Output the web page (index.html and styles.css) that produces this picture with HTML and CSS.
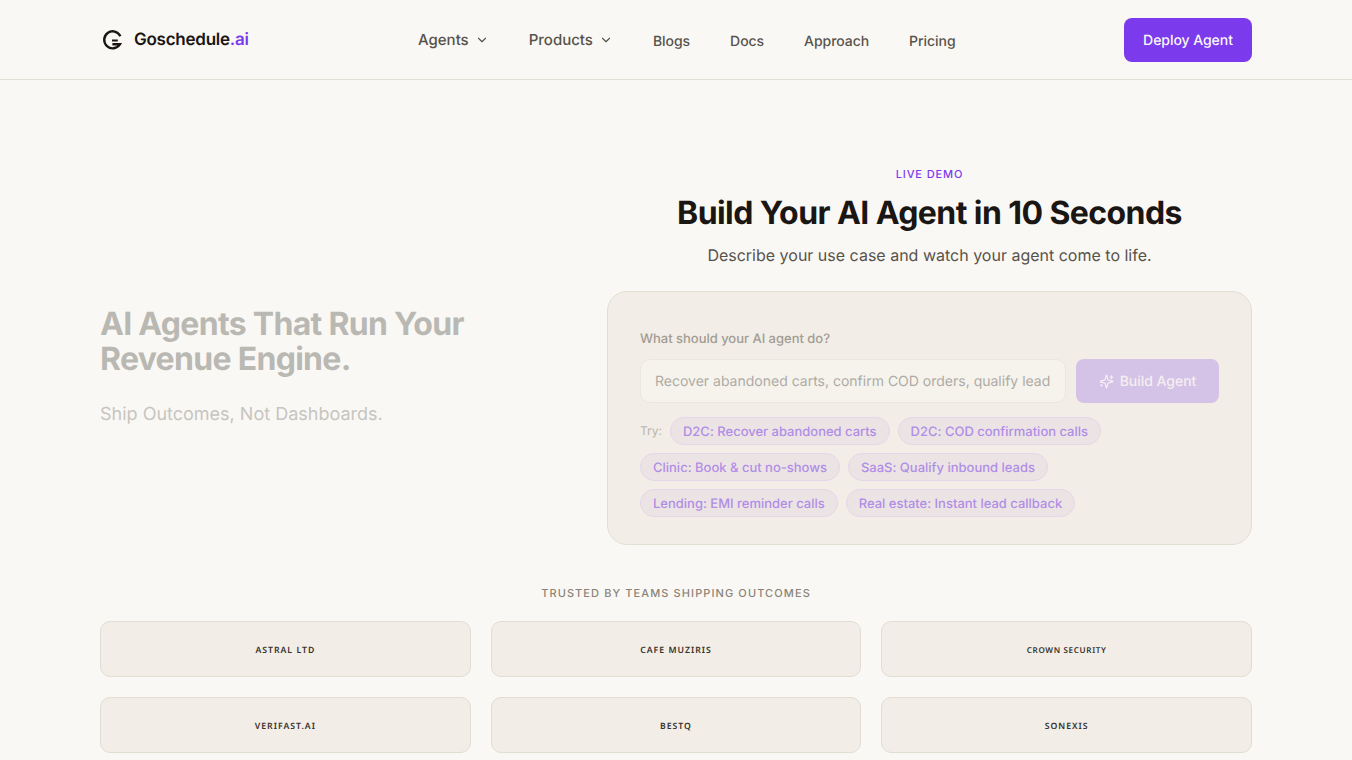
FILE: index.html
```html
<!DOCTYPE html>
<html lang="en">
<head>
<meta charset="utf-8">
<title>Goschedule.ai</title>
<link rel="stylesheet" href="styles.css">
</head>
<body>
<header class="site-header">
  <div class="container header-row">
    <a class="brand">
      <svg class="brand-mark" viewBox="0 0 24 24" width="24" height="24" fill="none" stroke="#1a1613" stroke-width="2.4">
        <path d="M20.4 8.2A8.5 8.5 0 1 0 20 16.2H12.4"/>
        <path d="M12 12.5h5.8" stroke-width="2"/>
      </svg>
      <span class="brand-name">Goschedule<span class="accent">.ai</span></span>
    </a>
    <nav class="nav">
      <a class="nav-menu">Agents <svg class="chevron" viewBox="0 0 24 24"><path d="m6 9 6 6 6-6"/></svg></a>
      <a class="nav-menu">Products <svg class="chevron" viewBox="0 0 24 24"><path d="m6 9 6 6 6-6"/></svg></a>
      <a class="nav-link">Blogs</a>
      <a class="nav-link">Docs</a>
      <a class="nav-link">Approach</a>
      <a class="nav-link">Pricing</a>
    </nav>
    <a class="deploy">Deploy Agent</a>
  </div>
</header>
<main class="container">
  <section class="hero">
    <div class="pitch">
      <h1 class="pitch-title">AI Agents That Run Your Revenue Engine.</h1>
      <p class="pitch-sub">Ship Outcomes, Not Dashboards.</p>
    </div>
    <div class="demo">
      <p class="eyebrow">LIVE DEMO</p>
      <h2 class="demo-title">Build Your AI Agent in 10 Seconds</h2>
      <p class="demo-sub">Describe your use case and watch your agent come to life.</p>
      <div class="card">
        <div class="card-body">
          <label class="prompt-label">What should your AI agent do?</label>
          <div class="prompt-row">
            <div class="prompt-input"><span class="prompt-text">Recover abandoned carts, confirm COD orders, qualify lead</span></div>
            <div class="build">
              <svg class="sparkles" viewBox="0 0 24 24"><path d="M9.937 15.5A2 2 0 0 0 8.5 14.063l-6.135-1.582a.5.5 0 0 1 0-.962L8.5 9.936A2 2 0 0 0 9.937 8.5l1.582-6.135a.5.5 0 0 1 .963 0L14.063 8.5A2 2 0 0 0 15.5 9.937l6.135 1.581a.5.5 0 0 1 0 .964L15.5 14.063a2 2 0 0 0-1.437 1.437l-1.582 6.135a.5.5 0 0 1-.963 0z"/><path d="M20 3v4M22 5h-4M4 17v2M5 18H3"/></svg>
              <span>Build Agent</span>
            </div>
          </div>
          <div class="chips">
            <span class="try">Try:</span>
            <span class="chip">D2C: Recover abandoned carts</span>
            <span class="chip">D2C: COD confirmation calls</span>
            <span class="chip">Clinic: Book &amp; cut no-shows</span>
            <span class="chip">SaaS: Qualify inbound leads</span>
            <span class="chip">Lending: EMI reminder calls</span>
            <span class="chip">Real estate: Instant lead callback</span>
          </div>
        </div>
      </div>
    </div>
  </section>
  <section class="trusted">
    <p class="trusted-title">TRUSTED BY TEAMS SHIPPING OUTCOMES</p>
    <div class="logos">
      <div class="logo">ASTRAL LTD</div>
      <div class="logo">CAFE MUZIRIS</div>
      <div class="logo logo-small">CROWN SECURITY</div>
      <div class="logo">VERIFAST.AI</div>
      <div class="logo">BESTQ</div>
      <div class="logo">SONEXIS</div>
    </div>
  </section>
</main>
</body>
</html>
```
FILE: styles.css
```css
* { box-sizing: border-box; }
body { margin: 0; height: 760px; overflow: hidden; background: #faf8f5; color: #1a1613; font-family: Inter, sans-serif; text-rendering: geometricPrecision; }
h1, h2, p { margin: 0; }
.container { width: 1152px; margin: 0 auto; }
.site-header { height: 80px; border-bottom: 1px solid #e2ded5; }
.header-row { height: 79px; display: flex; align-items: center; justify-content: space-between; }
.brand { display: flex; align-items: center; gap: 10px; width: 318px; }
.brand-name { font-size: 17px; font-weight: 600; line-height: 24px; letter-spacing: -0.25px; }
.accent { color: #7c3aed; }
.nav { display: flex; gap: 40px; align-items: center; margin-right: auto; color: #57534b; font-weight: 500; }
.nav-menu { display: flex; align-items: center; gap: 6px; font-size: 15px; line-height: 24px; }
.nav-link { font-size: 14px; line-height: 20px; padding-top: 4px; letter-spacing: -0.05px; }
.chevron { width: 14px; height: 14px; fill: none; stroke: currentColor; stroke-width: 2; stroke-linecap: round; stroke-linejoin: round; }
.deploy { width: 128px; height: 44px; padding-top: 1px; border-radius: 8px; background: #7c3aed; color: #faf8f5; font-size: 14px; font-weight: 500; letter-spacing: -0.05px; display: flex; align-items: center; justify-content: center; }

.hero { display: grid; grid-template-columns: 443px 645px; gap: 64px; align-items: center; padding-top: 84px; }
.pitch { padding-top: 25px; }
.pitch-title { width: 400px; font-size: 32px; line-height: 35px; font-weight: 700; letter-spacing: -0.7px; color: #b9b8b3; }
.pitch-sub { margin-top: 25px; font-size: 18px; line-height: 28px; color: #c7c5c0; }
.demo { text-align: center; }
.eyebrow { font-size: 11px; line-height: 20px; font-weight: 500; letter-spacing: 0.88px; color: #7c3aed; }
.demo-title { margin-top: 9px; font-size: 32px; line-height: 40px; font-weight: 700; letter-spacing: -0.58px; }
.demo-sub { margin-top: 9px; font-size: 16px; line-height: 26px; color: #57534b; }
.card { margin-top: 23px; height: 254px; padding: 37px 32px 0; text-align: left; border: 1px solid #e3ded4; border-radius: 20px; background: #f2ede6; }
.prompt-label { display: block; font-size: 13px; line-height: 20px; font-weight: 500; color: #a19c94; letter-spacing: -0.02px; }
.prompt-row { display: flex; gap: 10px; margin-top: 10px; }
.prompt-input { width: 426px; height: 44px; padding: 1px 14px 0; border: 1px solid #ebe7df; border-radius: 10px; background: #f6f3ed; display: flex; align-items: center; overflow: hidden; }
.prompt-text { font-size: 14px; color: #aeaba5; white-space: nowrap; }
.build { width: 143px; height: 44px; padding-top: 1px; border-radius: 8px; background: #d5c2e7; color: #f5eff0; font-size: 14px; font-weight: 500; letter-spacing: -0.03px; display: flex; align-items: center; justify-content: center; gap: 6px; }
.sparkles { width: 15px; height: 15px; fill: none; stroke: currentColor; stroke-width: 2; stroke-linecap: round; stroke-linejoin: round; }
.chips { display: flex; flex-wrap: wrap; gap: 8px; margin-top: 14px; align-items: center; }
.try { font-size: 12px; color: #bab5ad; padding-bottom: 1px; }
.chip { height: 28px; padding: 1px 12px 0; border: 1px solid #e3d8e9; border-radius: 14px; background: #ece3e5; color: #b08ee5; font-size: 13px; font-weight: 500; line-height: 26px; letter-spacing: -0.008px; white-space: nowrap; }

.trusted { margin-top: 38px; text-align: center; }
.trusted-title { font-size: 11px; line-height: 20px; font-weight: 500; letter-spacing: 1.1px; color: #8a8478; }
.logos { margin-top: 18px; display: grid; grid-template-columns: repeat(3, 1fr); gap: 20px; }
.logo { height: 56px; padding-top: 2px; border: 1px solid #e2ddd2; border-radius: 10px; background: #f2ede6; display: flex; align-items: center; justify-content: center; font: 600 8.7px "Noto Sans", sans-serif; letter-spacing: 1px; color: #37322c; }
.logo-small { font-size: 8.1px; letter-spacing: 0.65px; }
```
